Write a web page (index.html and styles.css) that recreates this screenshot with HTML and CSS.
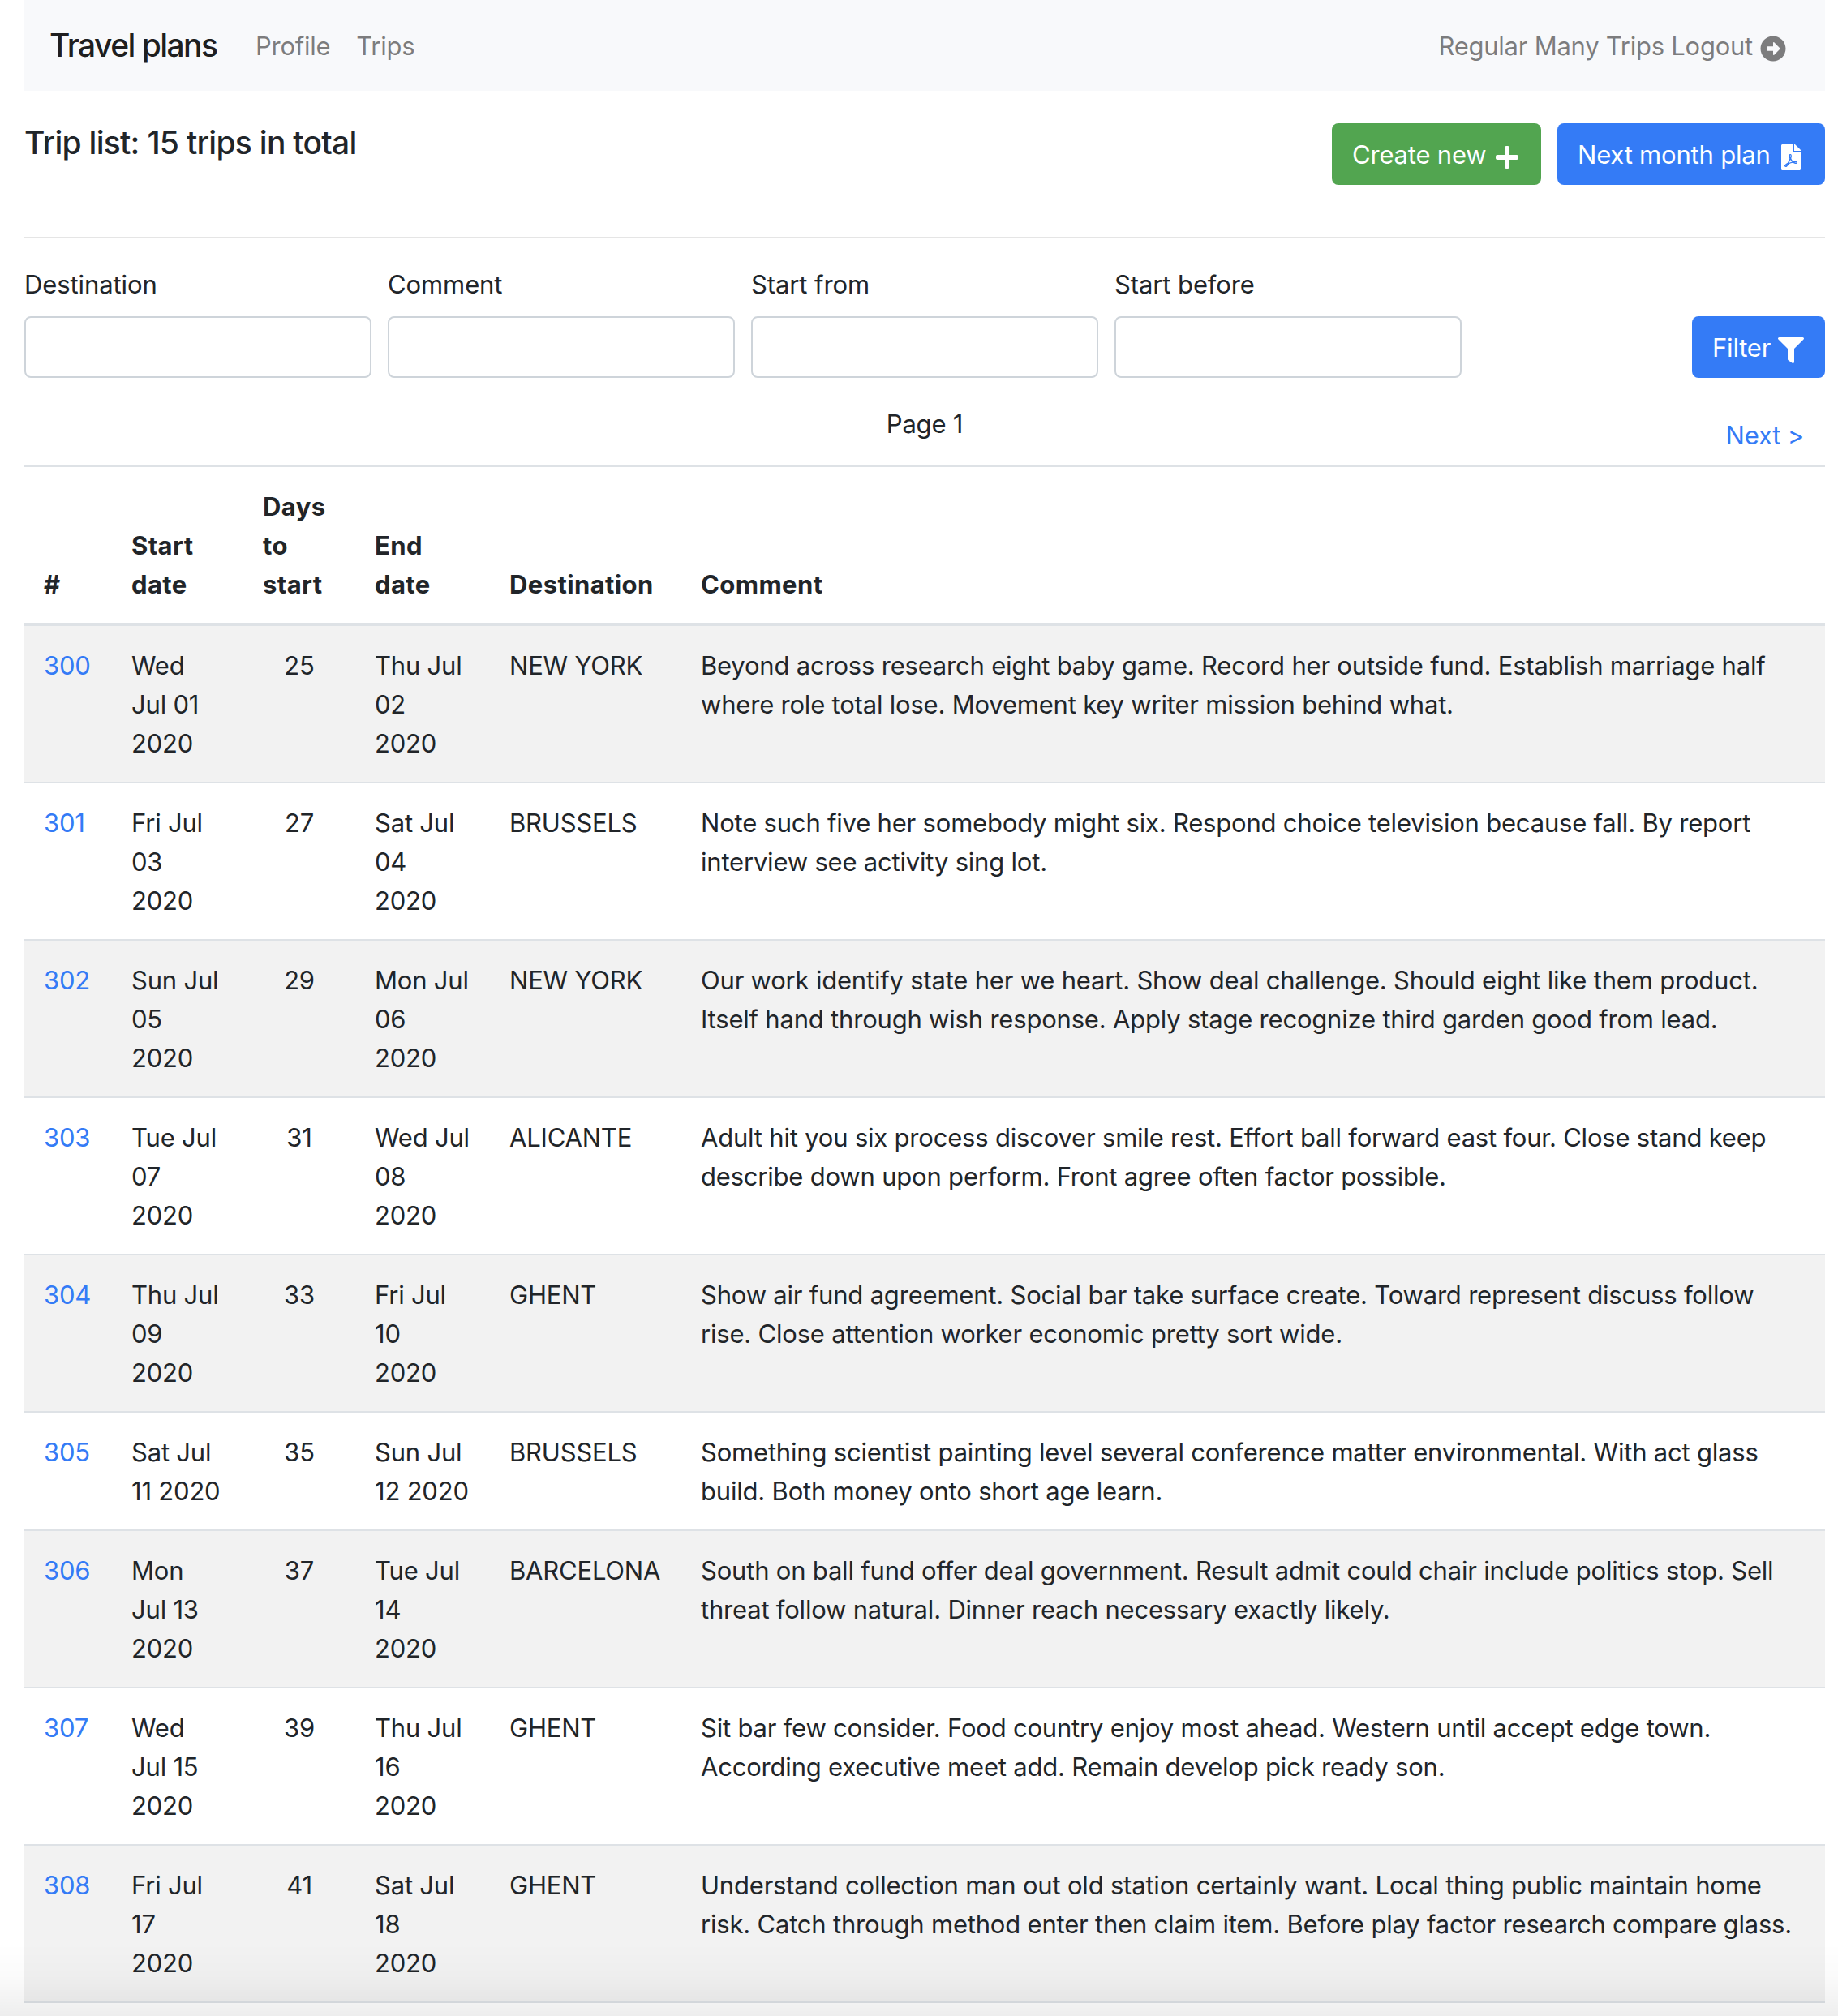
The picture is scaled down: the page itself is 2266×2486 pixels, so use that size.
FILE: index.html
```html
<!DOCTYPE html>
<html lang="en">
<head>
<meta charset="utf-8">
<title>Travel plans</title>
<link rel="stylesheet" href="styles.css">
</head>
<body>
<div class="container">
  <nav class="navbar">
    <a class="brand" href="#">Travel plans</a>
    <a class="nav-link" href="#">Profile</a>
    <a class="nav-link" href="#">Trips</a>
    <a class="nav-link logout" href="#"><span>Regular Many Trips Logout</span>
      <svg class="icon" viewBox="0 0 512 512"><path d="M256 8c137 0 248 111 248 248S393 504 256 504 8 393 8 256 119 8 256 8zM140 300h116v70.9c0 10.7 13 16.1 20.5 8.5l114.3-114.9c4.7-4.7 4.7-12.2 0-16.9l-114.3-115c-7.6-7.6-20.5-2.2-20.5 8.5V212H140c-6.6 0-12 5.4-12 12v64c0 6.6 5.4 12 12 12z"/></svg></a>
  </nav>

  <header class="heading">
    <h5 class="title">Trip list: 15 trips in total</h5>
    <div class="actions">
      <a class="btn btn-success create" href="#"><span>Create new</span>
        <svg class="icon" viewBox="-32 0 512 512"><path d="M416 208H272V64c0-17.67-14.33-32-32-32h-32c-17.67 0-32 14.33-32 32v144H32c-17.67 0-32 14.33-32 32v32c0 17.67 14.33 32 32 32h144v144c0 17.67 14.33 32 32 32h32c17.67 0 32-14.33 32-32V304h144c17.67 0 32-14.33 32-32v-32c0-17.67-14.33-32-32-32z"/></svg></a>
      <a class="btn btn-primary plan" href="#"><span>Next month plan</span>
        <svg class="icon" viewBox="-64 0 512 512"><path d="M181.9 256.1c-5-16-4.9-46.9-2-46.9 8.4 0 7.6 36.9 2 46.9zm-1.7 47.2c-7.7 20.2-17.3 43.3-28.4 62.7 18.3-7 39-17.2 62.9-21.9-12.7-9.6-24.9-23.4-34.5-40.8zM86.1 428.1c0 .8 13.2-5.4 34.9-40.2-6.7 6.3-29.1 24.5-34.9 40.2zM248 160h136v328c0 13.3-10.7 24-24 24H24c-13.3 0-24-10.7-24-24V24C0 10.7 10.7 0 24 0h200v136c0 13.2 10.8 24 24 24zm-8 171.8c-20-12.2-33.3-29-42.7-53.8 4.5-18.5 11.6-46.6 6.2-64.2-4.7-29.4-42.4-26.5-47.8-6.8-5 18.3-.4 44.1 8.1 77-11.6 27.6-28.7 64.6-40.8 85.8-.1 0-.1.1-.2.1-27.1 13.9-73.6 44.5-54.5 68 5.6 6.9 16 10 21.5 10 17.9 0 35.7-18 61.1-61.8 25.8-8.5 54.1-19.1 79-23.2 21.7 11.8 47.1 19.5 64 19.5 29.2 0 31.2-32 19.7-43.4-13.9-13.6-54.3-9.7-73.6-7.2zM377 105L279 7c-4.5-4.5-10.6-7-17-7h-6v128h128v-6.1c0-6.3-2.5-12.4-7-16.9zm-74.1 255.3c4.1-2.7-2.5-11.9-42.8-9 37.1 15.8 42.8 9 42.8 9z"/></svg></a>
    </div>
  </header>
  <hr class="rule">

  <form class="filters">
    <label class="field">Destination<input class="input" type="text"></label>
    <label class="field">Comment<input class="input" type="text"></label>
    <label class="field">Start from<input class="input" type="text"></label>
    <label class="field">Start before<input class="input" type="text"></label>
    <button class="btn btn-primary filter" type="button"><span>Filter</span>
      <svg class="icon" viewBox="0 0 512 512"><path d="M487.976 0H24.028C2.71 0-8.047 25.866 7.058 40.971L192 225.941V432c0 7.831 3.821 15.17 10.237 19.662l80 55.98C298.02 518.69 320 507.493 320 487.98V225.941l184.947-184.97C520.021 25.896 509.338 0 487.976 0z"/></svg></button>
  </form>

  <div class="pager">
    <span></span>
    <span class="page">Page 1</span>
    <a class="btn next" href="#"><span>Next &gt;</span></a>
  </div>

  <table class="trips">
    <colgroup><col class="c-id"><col class="c-start"><col class="c-days"><col class="c-end"><col class="c-dest"><col></colgroup>
    <thead>
      <tr><th>#</th><th>Start<br>date</th><th>Days<br>to<br>start</th><th>End<br>date</th><th>Destination</th><th>Comment</th></tr>
    </thead>
    <tbody>
      <tr><td><a href="#">300</a></td><td>Wed<br>Jul 01<br>2020</td><td class="days">25</td><td>Thu Jul<br>02<br>2020</td><td>NEW YORK</td><td>Beyond across research eight baby game. Record her outside fund. Establish marriage half<br>where role total lose. Movement key writer mission behind what.</td></tr>
      <tr><td><a href="#">301</a></td><td>Fri Jul<br>03<br>2020</td><td class="days">27</td><td>Sat Jul<br>04<br>2020</td><td>BRUSSELS</td><td>Note such five her somebody might six. Respond choice television because fall. By report<br>interview see activity sing lot.</td></tr>
      <tr><td><a href="#">302</a></td><td>Sun Jul<br>05<br>2020</td><td class="days">29</td><td>Mon Jul<br>06<br>2020</td><td>NEW YORK</td><td>Our work identify state her we heart. Show deal challenge. Should eight like them product.<br>Itself hand through wish response. Apply stage recognize third garden good from lead.</td></tr>
      <tr><td><a href="#">303</a></td><td>Tue Jul<br>07<br>2020</td><td class="days">31</td><td>Wed Jul<br>08<br>2020</td><td>ALICANTE</td><td>Adult hit you six process discover smile rest. Effort ball forward east four. Close stand keep<br>describe down upon perform. Front agree often factor possible.</td></tr>
      <tr><td><a href="#">304</a></td><td>Thu Jul<br>09<br>2020</td><td class="days">33</td><td>Fri Jul<br>10<br>2020</td><td>GHENT</td><td>Show air fund agreement. Social bar take surface create. Toward represent discuss follow<br>rise. Close attention worker economic pretty sort wide.</td></tr>
      <tr><td><a href="#">305</a></td><td>Sat Jul<br>11 2020</td><td class="days">35</td><td>Sun Jul<br>12 2020</td><td>BRUSSELS</td><td>Something scientist painting level several conference matter environmental. With act glass<br>build. Both money onto short age learn.</td></tr>
      <tr><td><a href="#">306</a></td><td>Mon<br>Jul 13<br>2020</td><td class="days">37</td><td>Tue Jul<br>14<br>2020</td><td>BARCELONA</td><td>South on ball fund offer deal government. Result admit could chair include politics stop. Sell<br>threat follow natural. Dinner reach necessary exactly likely.</td></tr>
      <tr><td><a href="#">307</a></td><td>Wed<br>Jul 15<br>2020</td><td class="days">39</td><td>Thu Jul<br>16<br>2020</td><td>GHENT</td><td>Sit bar few consider. Food country enjoy most ahead. Western until accept edge town.<br>According executive meet add. Remain develop pick ready son.</td></tr>
      <tr><td><a href="#">308</a></td><td>Fri Jul<br>17<br>2020</td><td class="days">41</td><td>Sat Jul<br>18<br>2020</td><td>GHENT</td><td>Understand collection man out old station certainly want. Local thing public maintain home<br>risk. Catch through method enter then claim item. Before play factor research compare glass.</td></tr>
    </tbody>
  </table>
</div>
<div class="fade"></div>
</body>
</html>
```
FILE: styles.css
```css
* { box-sizing: border-box; }

body {
  margin: 0;
  height: 2486px;
  overflow: hidden;
  background: #fff;
  color: #212529;
  font: 400 31px/48px "Inter", "Liberation Sans", sans-serif;
  letter-spacing: -0.2px;
}

a { color: #347bf6; text-decoration: none; }

.container { width: 2220px; margin-left: 30px; }

.icon { flex: none; width: 32px; height: 32px; margin-top: 8px; fill: currentColor; }

/* Navigation */
.navbar {
  display: flex;
  align-items: center;
  height: 112px;
  padding: 0 48px 0 31px;
  background: #f8f9fb;
  white-space: nowrap;
}
.brand { width: 237px; margin-right: 17px; color: rgba(0, 0, 0, .9); font-size: 39px; font-weight: 450; letter-spacing: -1.55px; }
.nav-link { margin-right: 32px; padding-top: 2px; color: rgba(0, 0, 0, .5); letter-spacing: -0.25px; }
.logout { display: flex; align-items: center; gap: 9px; margin: 0 0 0 auto; padding-top: 0; }
.logout span, .btn span { padding-top: 2px; }

/* Heading */
.heading { display: flex; justify-content: space-between; height: 76px; margin-top: 40px; }
.title { margin: 0; font-size: 39px; font-weight: 500; letter-spacing: -0.72px; }
.actions { display: flex; gap: 20px; }

.btn {
  display: flex;
  align-items: center;
  justify-content: space-between;
  height: 76px;
  padding: 0 26px 0 25px;
  border: 0;
  border-radius: 8px;
  color: #fff;
  font: inherit;
  letter-spacing: -0.2px;
  white-space: nowrap;
}
.btn-success { background: #52a550; }
.btn-primary { background: #347bf6; }
.create { width: 258px; }
.plan { width: 330px; }
.rule { height: 2px; margin: 64px 0 33px; border: 0; background: #e5e5e5; }

/* Filters */
.filters { display: grid; grid-template-columns: repeat(5, 428px); gap: 20px; align-items: end; }
.field { display: flex; flex-direction: column; gap: 15px; letter-spacing: -0.1px; }
.input { width: 100%; height: 76px; border: 2px solid #ced4da; border-radius: 8px; background: #fff; }
.filter { justify-self: end; width: 164px; }

/* Pagination */
.pager { display: grid; grid-template-columns: 1fr auto 1fr; padding-top: 32px; }
.page { padding-top: 1px; }
.next { justify-self: end; color: #347bf6; }

/* Trips */
.trips { width: 100%; table-layout: fixed; border-spacing: 0; }
.trips th, .trips td { padding: 25px 0 23px 24px; border-top: 2px solid #dee2e6; text-align: left; vertical-align: top; white-space: nowrap; }
.trips th { border-bottom: 4px solid #dee2e6; font-weight: 700; letter-spacing: .4px; vertical-align: bottom; }
.trips tbody tr:first-child td { border-top: 0; }
.trips tbody tr:nth-child(odd) { background: #f2f2f2; }
.trips tbody tr:last-child td { border-bottom: 2px solid #dee2e6; }
.trips .days { padding-left: 0; text-align: center; }
.c-id { width: 108px; }
.c-start { width: 162px; }
.c-days { width: 138px; }
.c-end { width: 166px; }
.c-dest { width: 236px; }

/* Shade over the bottom edge of the window */
.fade {
  position: fixed;
  inset: auto 0 0;
  height: 90px;
  background: linear-gradient(rgba(0, 0, 0, 0), rgba(0, 0, 0, .015) 45%, rgba(0, 0, 0, .065));
}
```
